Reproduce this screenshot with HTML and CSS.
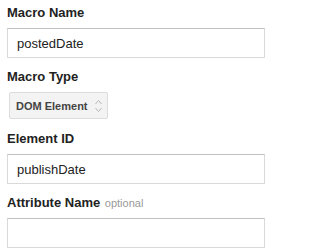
FILE: index.html
```html
<!DOCTYPE html>
<html>
<head>
<meta charset="utf-8">
<link rel="stylesheet" href="styles.css">
</head>
<body>
<form class="form">
  <div class="field">
    <label class="label">Macro Name</label>
    <input class="text-input" type="text" value="postedDate">
  </div>
  <div class="field field-select">
    <label class="label">Macro Type</label>
    <div class="select">
      <span class="select-text">DOM Element</span>
      <svg class="select-arrows" width="7" height="14" viewBox="0 0 7 14">
        <path d="M0.5 5 L3.5 1.5 L6.5 5" fill="none" stroke="#b5b5b5" stroke-width="1"/>
        <path d="M0.5 9 L3.5 12.5 L6.5 9" fill="none" stroke="#b5b5b5" stroke-width="1"/>
      </svg>
    </div>
  </div>
  <div class="field">
    <label class="label">Element ID</label>
    <input class="text-input" type="text" value="publishDate">
  </div>
  <div class="field">
    <label class="label">Attribute Name <span class="optional">optional</span></label>
    <input class="text-input" type="text" value="">
  </div>
</form>
</body>
</html>
```

FILE: styles.css
```css
html, body {
  margin: 0;
  background: #ffffff;
}
body {
  padding: 5px 6px 0 7px;
  font-family: "Liberation Sans", Arial, sans-serif;
  color: #222222;
}
.form {
  display: flex;
  flex-direction: column;
  gap: 11px;
}
.field {
  display: flex;
  flex-direction: column;
}
.field-select {
  margin-bottom: 1px;
}
.label {
  display: block;
  font-size: 13px;
  font-weight: bold;
  line-height: 16px;
  color: #222222;
  margin-bottom: 7px;
}
.optional {
  font-size: 11px;
  font-weight: normal;
  color: #999999;
  margin-left: 1px;
}
.text-input {
  box-sizing: border-box;
  width: 258px;
  height: 30px;
  margin: 0;
  padding: 0 9px;
  border: 1px solid #d9d9d9;
  border-top-color: #c0c0c0;
  border-radius: 0;
  font-family: "Liberation Sans", Arial, sans-serif;
  font-size: 13px;
  color: #222222;
  background: #ffffff;
  outline: none;
}
.select {
  box-sizing: border-box;
  align-self: flex-start;
  margin-left: 2px;
  width: 99px;
  height: 27px;
  padding: 0 5px 0 6px;
  display: flex;
  align-items: center;
  justify-content: space-between;
  background: #f3f3f3;
  border: 1px solid #dcdcdc;
  border-radius: 2px;
}
.select-text {
  font-size: 11px;
  font-weight: bold;
  color: #444444;
}
.select-arrows {
  display: block;
}
```
